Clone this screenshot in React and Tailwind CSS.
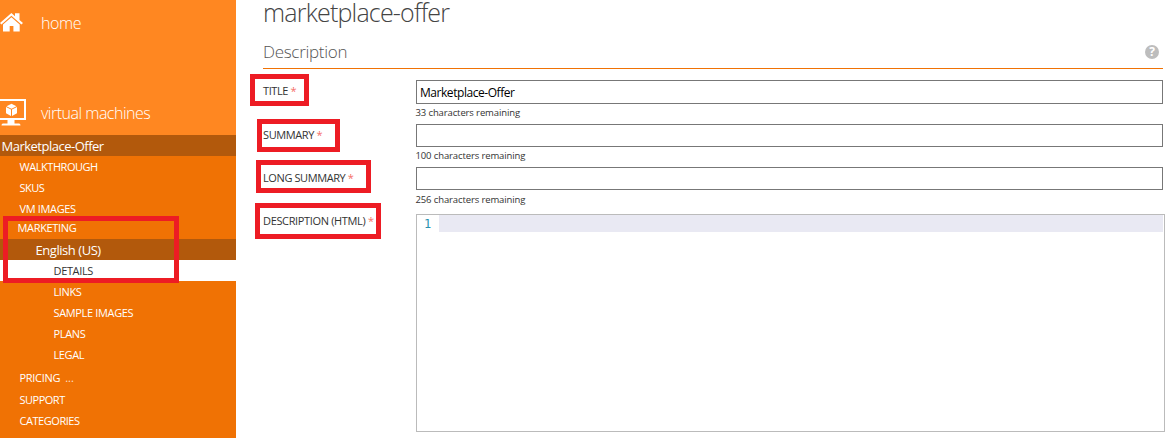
const menu = [
  { label: 'WALKTHROUGH', cls: 'h-[21px] pl-[19.5px] tracking-[-0.45px]' },
  { label: 'SKUS', cls: 'h-[21px] pl-[19.5px] tracking-[-0.5px]' },
  { label: 'VM IMAGES', cls: 'h-[21px] pl-[19.5px] tracking-[-0.35px]' },
  { label: 'MARKETING', cls: 'h-5 pb-1 pl-[17.5px] tracking-[-0.33px]' },
  { label: 'English (US)', cls: 'h-[21px] pl-[35.5px] bg-[#b2590c] text-[13px] tracking-[-0.45px]' },
  { label: 'DETAILS', cls: 'h-[21px] pl-[53.5px] bg-white text-[#333] tracking-[-0.35px]' },
  { label: 'LINKS', cls: 'h-[21px] pl-[53.5px] tracking-[-0.4px]' },
  { label: 'SAMPLE IMAGES', cls: 'h-[21px] pl-[53.5px] tracking-[-0.35px]' },
  { label: 'PLANS', cls: 'h-[21px] pl-[53.5px] tracking-[-0.35px]' },
  { label: 'LEGAL', cls: 'h-[21px] pl-[53.5px] tracking-[-0.4px]' },
  { label: 'PRICING', more: true, cls: 'mt-[1px] h-[22px] pl-[19.5px] tracking-[-0.3px]' },
  { label: 'SUPPORT', cls: 'h-[22px] pl-[19.5px] tracking-[-0.5px]' },
  { label: 'CATEGORIES', cls: 'h-[21px] pl-[19.5px] tracking-[-0.45px]' },
];

const fields = [
  { label: 'TITLE', value: 'Marketplace-Offer', left: 33, row: 'h-11', input: 'h-6', hint: 'pt-[2px]' },
  { label: 'SUMMARY', value: '', left: 100, row: 'h-[43px]', input: 'h-[23px]', hint: 'pt-[2px]' },
  { label: 'LONG SUMMARY', value: '', left: 256, row: 'h-[47px]', input: 'h-[23px]', hint: 'pt-[3px]' },
];

function HomeIcon() {
  return (
    <svg className="h-[19px] w-[23px]" viewBox="0 0 23 19" fill="white">
      <path d="M11.4 0 L15 3.2 V.3 H19.5 V7.1 L23 10.1 L21.4 11.5 L11.4 2.8 L1.4 11.5 L0 10.1 Z" />
      <path d="M11.4 4.3 L19.7 11.5 V18.5 H13.4 V13 H9.7 V18.5 H3 V11.5 Z" />
    </svg>
  );
}

function MachineIcon() {
  return (
    <svg className="h-[27px] w-[26px]" viewBox="0 0 26 27" fill="white">
      <path fillRule="evenodd" d="M0 0 H26 V21 H0 Z M0 2 V19 H24 V2 Z" />
      <path d="M7.5 21 H14.5 V24.5 H19 Q20.5 24.5 20.5 26.5 H1.5 Q1.5 24.5 3 24.5 H7.5 Z" />
      <path d="M11.5 4.8 L16.5 7.3 L11.5 9.8 L6.5 7.3 Z M6 8.1 L11 10.6 V17 L6 14.2 Z M17 8.1 L12 10.6 V17 L17 14.2 Z" />
    </svg>
  );
}

function Star() {
  return <span className="text-[#f56e66]">*</span>;
}

export default function App() {
  return (
    <div className="relative flex h-[438px] w-[1170px] overflow-hidden bg-white font-['Open_Sans','Noto_Sans',sans-serif]">
      <aside className="w-[236px] shrink-0 bg-[#f07204] text-white">
        <div className="h-[135px] bg-[#ff8721] text-[16px] font-light">
          <div className="flex h-[45px] items-center">
            <div className="w-[41px] shrink-0"><HomeIcon /></div>
            <span className="tracking-[-0.4px]">home</span>
          </div>
          <div className="mt-[45px] flex h-[45px] items-center">
            <div className="w-[41px] shrink-0"><MachineIcon /></div>
            <span className="whitespace-nowrap tracking-[-0.5px]">virtual machines</span>
          </div>
        </div>
        <div className="flex h-[21px] items-center bg-[#b2590c] pt-[2px] pl-[1.5px] text-[13px] tracking-[-0.5px]">Marketplace-Offer</div>
        <nav className="text-[11px]">
          {menu.map((m) => (
            <div key={m.label} className={'flex items-center whitespace-nowrap ' + m.cls}>
              <span className="pt-[2px]">{m.label}</span>
              {m.more && <span className="ml-[5px] pt-[2px] tracking-normal opacity-80">...</span>}
            </div>
          ))}
        </nav>
      </aside>

      <main className="w-[929px] shrink-0 pl-[27px] text-[#333]">
        <h1 className="h-[38px] text-[25px] leading-[25px] font-light tracking-[-0.8px] text-[#444]">marketplace-offer</h1>
        <div className="mr-[2px] flex h-[31px] items-center justify-between border-b border-[#f07204] pr-1 pb-[3px]">
          <h2 className="text-[17px] font-light tracking-[-0.3px] text-[#555]">Description</h2>
          <span className="flex h-[14px] w-[14px] items-center justify-center rounded-full bg-[#bdbdbd] text-[12px] leading-[14px] font-bold text-white">?</span>
        </div>
        <form className="pt-[11px]">
          {fields.map((f) => (
            <div key={f.label} className={'flex ' + f.row}>
              <label className="w-[153px] shrink-0 pt-[3px] text-[11px] leading-4 tracking-[-0.4px] whitespace-nowrap">
                {f.label} <Star />
              </label>
              <div className="w-[747px]">
                <div className={'flex items-center border border-[#777] pt-[2px] pl-[3px] text-[12px] tracking-[-0.45px] text-black ' + f.input}>{f.value}</div>
                <div className={'-ml-[0.5px] text-[9.5px] leading-[14px] tracking-[-0.12px] ' + f.hint}>{f.left} characters remaining</div>
              </div>
            </div>
          ))}
          <div className="flex">
            <label className="-mt-px w-[153px] shrink-0 text-[11px] leading-4 tracking-[-0.35px] whitespace-nowrap">
              DESCRIPTION (HTML) <Star />
            </label>
            <div className="h-[218px] w-[749px] border border-[#bbb] pr-px">
              <div className="flex h-[17px] items-center">
                <span className="w-[22px] shrink-0 pt-px pl-[7px] font-['DejaVu_Sans_Mono',monospace] text-[12px] text-[#2b91af]">1</span>
                <span className="h-full flex-1 bg-[#e9e9f3]" />
              </div>
            </div>
          </div>
        </form>
      </main>

      <div className="absolute top-[216px] left-[3px] h-[67px] w-[176px] border-5 border-[#ed1c24]" />
      <div className="absolute top-[74px] left-[250px] h-8 w-[59px] border-5 border-[#ed1c24]" />
      <div className="absolute top-[119px] left-[257px] h-[33px] w-[83px] border-5 border-[#ed1c24]" />
      <div className="absolute top-[160px] left-[256px] h-[33px] w-[115px] border-5 border-[#ed1c24]" />
      <div className="absolute top-[203px] left-[255px] h-9 w-[126px] border-5 border-[#ed1c24]" />
    </div>
  );
}
